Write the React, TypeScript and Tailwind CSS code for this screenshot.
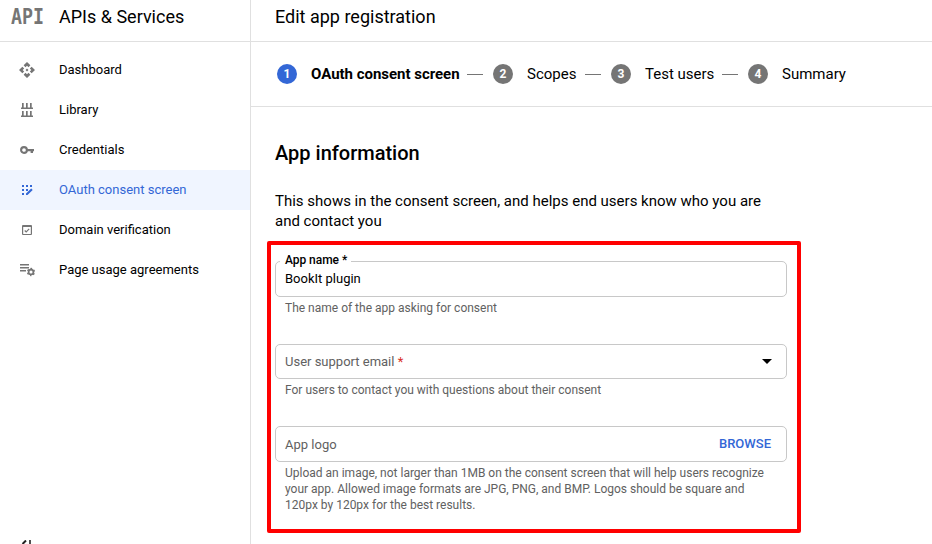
import type { ReactNode } from "react";

function Icon({ children, viewBox = "0 0 16 16" }: { children: ReactNode; viewBox?: string }) {
  return (
    <svg width="16" height="16" viewBox={viewBox} fill="currentColor" className="shrink-0">
      {children}
    </svg>
  );
}

const icons = {
  dashboard: (
    <Icon viewBox="1 1 22 22">
      <path d="M14 12l-2 2-2-2 2-2 2 2zm-2-6l2.120 2.120 2.500-2.500L12 1 7.380 5.620l2.500 2.500L12 6zm-6 6l2.120-2.120-2.500-2.500L1 12l4.620 4.620 2.500-2.500L6 12zm12 0l-2.120 2.120 2.500 2.500L23 12l-4.620-4.620-2.500 2.500L18 12zm-6 6l-2.120-2.120-2.500 2.500L12 23l4.620-4.620-2.500-2.500L12 18z" />
    </Icon>
  ),
  library: (
    <Icon>
      <path d="M3 1h1.700v4.600H7V1h1.700v4.600H11V1h1.700v4.600H14V7H2V5.600h1zM3 9h1.700v4.600H7V9h1.700v4.600H11V9h1.700v4.600H14V15H2v-1.400h1z" />
    </Icon>
  ),
  key: (
    <Icon>
      <circle cx="5" cy="8" r="2.900" fill="none" stroke="currentColor" strokeWidth="2.100" />
      <path d="M8 7h7v2.200h-1V11h-2.400V9.200H8z" />
    </Icon>
  ),
  consent: (
    <Icon>
      <path d="M3 3h2v2H3zM7 3h2v2H7zM11 3h2v2h-2zM3 7h2v2H3zM7 7h2v2H7zM3 11h2v2H3zM7 11.600L12.200 6.400l1.500 1.500L8.500 13H7z" />
    </Icon>
  ),
  domain: (
    <Icon>
      <path fillRule="evenodd" d="M4 3h8q1 0 1 1v8q0 1-1 1H4q-1 0-1-1V4q0-1 1-1zm.2 2v6.900h7.600V5z" />
      <path d="M5.700 8.500l1.500 1.500 3-3.100" fill="none" stroke="currentColor" strokeWidth="1.200" />
    </Icon>
  ),
  agreements: (
    <Icon>
      <path d="M1 2h9v1.500H1zM1 5h9v1.500H1zM1 8h6v1.500H1z" />
      <circle cx="12" cy="10" r="2.400" fill="none" stroke="currentColor" strokeWidth="1.700" />
      <circle cx="12" cy="10" r="3.500" fill="none" stroke="currentColor" strokeWidth="1.300" strokeDasharray="1.830 1.830" strokeDashoffset="0.915" transform="rotate(90 12 10)" />
    </Icon>
  ),
};

const nav = [
  { label: "Dashboard", icon: icons.dashboard },
  { label: "Library", icon: icons.library },
  { label: "Credentials", icon: icons.key },
  { label: "OAuth consent screen", icon: icons.consent, active: true },
  { label: "Domain verification", icon: icons.domain },
  { label: "Page usage agreements", icon: icons.agreements },
];

function Sidebar() {
  return (
    <aside className="flex w-[251px] shrink-0 flex-col border-r border-[#e0e0e0]">
      <div className="flex h-[42px] shrink-0 items-start border-b border-[#e0e0e0] pt-[5px]">
        <div className="w-[59px] pl-[11px]">
          <span className="inline-block origin-left scale-x-[0.83] font-['DejaVu_Sans_Mono',monospace] text-[22px] leading-6 font-bold text-[#757575]">
            API
          </span>
        </div>
        <h1 className="text-lg leading-6 whitespace-nowrap">APIs &amp; Services</h1>
      </div>
      <nav className="pt-2">
        {nav.map((n) => (
          <a
            key={n.label}
            className={
              n.active
                ? "flex h-10 items-center bg-[#f0f5ff] text-[#3367d6]"
                : "flex h-10 items-center"
            }
          >
            <span className={n.active ? "w-[59px] pl-[19px]" : "w-[59px] pl-[19px] text-[#757575]"}>{n.icon}</span>
            <span className="text-[13px]">{n.label}</span>
          </a>
        ))}
      </nav>
      <div className="mt-auto flex h-[4px] overflow-hidden pl-[20px]">
        <svg width="14" height="4" viewBox="0 0 14 4" fill="none" stroke="#222">
          <path d="M2.500 4L6 0.500" strokeWidth="2" />
          <path d="M10 0v4" strokeWidth="1.600" />
        </svg>
      </div>
    </aside>
  );
}

function Step({ n, label, active = false }: { n: number; label: string; active?: boolean }) {
  return (
    <div className="flex items-center gap-[14px]">
      <span
        className={
          active
            ? "flex size-5 items-center justify-center rounded-full bg-[#3367d6] text-xs font-bold text-white"
            : "flex size-5 items-center justify-center rounded-full bg-[#757575] text-xs font-bold text-white"
        }
      >
        {n}
      </span>
      <span className={active ? "text-[15px] font-bold tracking-[-0.02px]" : "text-[15px]"}>{label}</span>
    </div>
  );
}

function Dash() {
  return <span className="h-px w-4 bg-[#757575]" />;
}

export default function App() {
  return (
    <div className="flex h-[544px] w-[932px] overflow-hidden bg-white font-[Roboto,sans-serif] text-black">
      <Sidebar />
      <main className="flex min-w-0 flex-1 flex-col">
        <header className="h-[42px] shrink-0 border-b border-[#e0e0e0] pt-[5px] pl-6">
          <h2 className="text-lg leading-6">Edit app registration</h2>
        </header>
        <div className="flex h-[65px] shrink-0 items-center border-b border-[#e0e0e0] pl-[26px] whitespace-nowrap">
          <div className="flex w-[216px] items-center justify-between pr-[10px]">
            <Step n={1} label="OAuth consent screen" active />
            <Dash />
          </div>
          <div className="flex w-[118px] items-center justify-between pr-[10px]">
            <Step n={2} label="Scopes" />
            <Dash />
          </div>
          <div className="flex w-[137px] items-center justify-between pr-[10px]">
            <Step n={3} label="Test users" />
            <Dash />
          </div>
          <Step n={4} label="Summary" />
        </div>
        <h3 className="mt-[34px] ml-6 text-xl leading-6 font-medium">App information</h3>
        <p className="mt-[26px] ml-6 text-[15px] leading-5 whitespace-nowrap">
          This shows in the consent screen, and helps end users know who you are
          <br />
          and contact you
        </p>
        <section className="mt-[10px] ml-4 flex h-[292px] w-[534px] shrink-0 flex-col rounded-[2px] border-4 border-[#ff0000] px-1 pt-4 text-[13px]">
          <div className="relative h-9 w-[512px] shrink-0 rounded-[5px] border border-[#c8c8c8] pt-[9px] pl-[9px] leading-4">
            <span className="absolute -top-2 left-[4px] bg-white pr-[4px] pl-[5px] text-xs leading-3 font-medium tracking-[-0.05px]">
              App name *
            </span>
            BookIt plugin
          </div>
          <p className="mt-[3px] pl-[10px] text-xs leading-4 text-[#616161]">The name of the app asking for consent</p>
          <div className="mt-[28px] flex h-[35px] w-[512px] shrink-0 items-center justify-between rounded-[5px] border border-[#c8c8c8] pr-[14px] pl-[9px]">
            <span className="text-[#616161]">
              User support email <span className="text-[#d93025]">*</span>
            </span>
            <svg width="10" height="5" viewBox="0 0 10 5">
              <path d="M0 0h10L5 5z" />
            </svg>
          </div>
          <p className="mt-[3px] pl-[10px] text-xs leading-4 text-[#616161]">
            For users to contact you with questions about their consent
          </p>
          <div className="mt-[28px] flex h-9 w-[512px] shrink-0 items-center justify-between rounded-[5px] border border-[#c8c8c8] pr-[15px] pl-[9px]">
            <span className="pt-px text-[#616161]">App logo</span>
            <span className="font-medium text-[#3367d6]">BROWSE</span>
          </div>
          <p className="mt-[3px] pl-[10px] text-xs leading-4 whitespace-nowrap text-[#616161]">
            Upload an image, not larger than 1MB on the consent screen that will help users recognize
            <br />
            your app. Allowed image formats are JPG, PNG, and BMP. Logos should be square and
            <br />
            120px by 120px for the best results.
          </p>
        </section>
      </main>
    </div>
  );
}
